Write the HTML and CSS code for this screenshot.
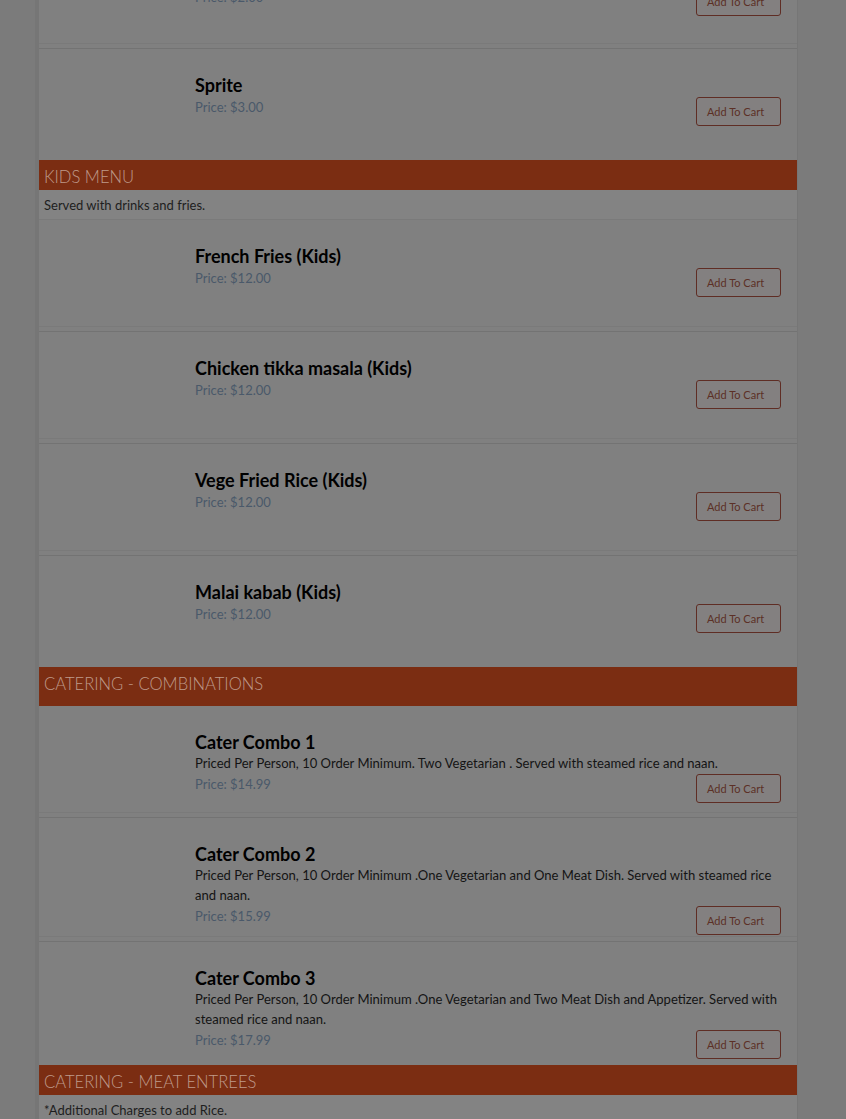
FILE: index.html
```html
<!DOCTYPE html>
<html lang="en">
<head>
<meta charset="utf-8">
<title>Menu</title>
<link rel="stylesheet" href="styles.css">
</head>
<body>
<div class="page">
  <div class="menu">
    <div class="item item-first">
      <div class="info">
        <div class="name">Coke</div>
        <div class="buy"><span class="price">Price: $2.00</span><button class="cart">Add To Cart</button></div>
      </div>
    </div>
    <div class="item item-last">
      <div class="info">
        <div class="name">Sprite</div>
        <div class="buy"><span class="price">Price: $3.00</span><button class="cart">Add To Cart</button></div>
      </div>
    </div>

    <div class="cat">KIDS MENU</div>
    <div class="cat-desc">Served with drinks and fries.</div>
    <div class="item">
      <div class="info">
        <div class="name">French Fries (Kids)</div>
        <div class="buy"><span class="price">Price: $12.00</span><button class="cart">Add To Cart</button></div>
      </div>
    </div>
    <div class="item">
      <div class="info">
        <div class="name">Chicken tikka masala (Kids)</div>
        <div class="buy"><span class="price">Price: $12.00</span><button class="cart">Add To Cart</button></div>
      </div>
    </div>
    <div class="item">
      <div class="info">
        <div class="name">Vege Fried Rice (Kids)</div>
        <div class="buy"><span class="price">Price: $12.00</span><button class="cart">Add To Cart</button></div>
      </div>
    </div>
    <div class="item item-last">
      <div class="info">
        <div class="name">Malai kabab (Kids)</div>
        <div class="buy"><span class="price">Price: $12.00</span><button class="cart">Add To Cart</button></div>
      </div>
    </div>

    <div class="cat cat-tall">CATERING - COMBINATIONS</div>
    <div class="item">
      <div class="info">
        <div class="name">Cater Combo 1</div>
        <div class="desc">Priced Per Person, 10 Order Minimum. Two Vegetarian . Served with steamed rice and naan.</div>
        <div class="buy"><span class="price">Price: $14.99</span><button class="cart">Add To Cart</button></div>
      </div>
    </div>
    <div class="item">
      <div class="info">
        <div class="name">Cater Combo 2</div>
        <div class="desc">Priced Per Person, 10 Order Minimum .One Vegetarian and One Meat Dish. Served with steamed rice and naan.</div>
        <div class="buy"><span class="price">Price: $15.99</span><button class="cart">Add To Cart</button></div>
      </div>
    </div>
    <div class="item item-last">
      <div class="info">
        <div class="name">Cater Combo 3</div>
        <div class="desc">Priced Per Person, 10 Order Minimum .One Vegetarian and Two Meat Dish and Appetizer. Served with steamed rice and naan.</div>
        <div class="buy"><span class="price">Price: $17.99</span><button class="cart">Add To Cart</button></div>
      </div>
    </div>

    <div class="cat">CATERING - MEAT ENTREES</div>
    <div class="cat-desc">*Additional Charges to add Rice.</div>
    <div class="item">
      <div class="info">
        <div class="name">Butter Chicken</div>
        <div class="buy"><span class="price">Price: $12.00</span><button class="cart">Add To Cart</button></div>
      </div>
    </div>
  </div>
</div>
</body>
</html>
```

FILE: styles.css
```css
html, body {
  margin: 0;
  padding: 0;
  height: 100%;
  overflow: hidden;
}

body {
  background: #7b7b7b;
  font-family: Lato, "Liberation Sans", sans-serif;
  color: #1a1a1a;
}

.page {
  padding-left: 39px;
  width: 758px;
}

.menu {
  background: #808080;
  box-shadow: -5px 0 0 -1px #767676, 1px 0 0 0 #767676;
}

.item {
  box-sizing: border-box;
  min-height: 112px;
  padding: 25px 15px 6px 156px;
  border-bottom: 1px solid #737373;
  background: linear-gradient(to top, transparent 4px, #7a7a7a 4px, #7a7a7a 5px, transparent 5px);
}

.item-first {
  margin-top: -61px;
  min-height: 110px;
}

.item-last {
  border-bottom: 0;
  background: none;
  min-height: 111px;
}

.name {
  font-size: 18px;
  line-height: 22px;
  font-weight: 700;
  color: #000;
}

.desc {
  font-size: 13.05px;
  line-height: 20px;
  color: #141414;
}

.buy {
  display: flex;
  justify-content: space-between;
  align-items: flex-start;
}

.price {
  font-size: 13px;
  line-height: 22px;
  color: #4a596a;
}

.cart {
  margin-top: 1px;
  margin-right: 1px;
  box-sizing: border-box;
  height: 29px;
  width: 85px;
  padding: 0 0 0 10px;
  text-align: left;
  font-family: inherit;
  font-size: 11px;
  color: #5c3026;
  background: #838080;
  border: 1px solid #5f2d24;
  border-radius: 3px;
}

.cat {
  box-sizing: border-box;
  height: 30px;
  padding: 7px 5px 0;
  background: #7b2d12;
  color: #bf9a8a;
  font-size: 16.6px;
  line-height: 20px;
  font-weight: 300;
}

.cat-tall {
  height: 39px;
}

.cat-desc {
  box-sizing: border-box;
  height: 30px;
  padding: 6px 5px 0;
  background: #838383;
  border-bottom: 1px solid #7a7a7a;
  font-size: 13px;
  line-height: 18px;
  color: #1e1e1e;
}
```
